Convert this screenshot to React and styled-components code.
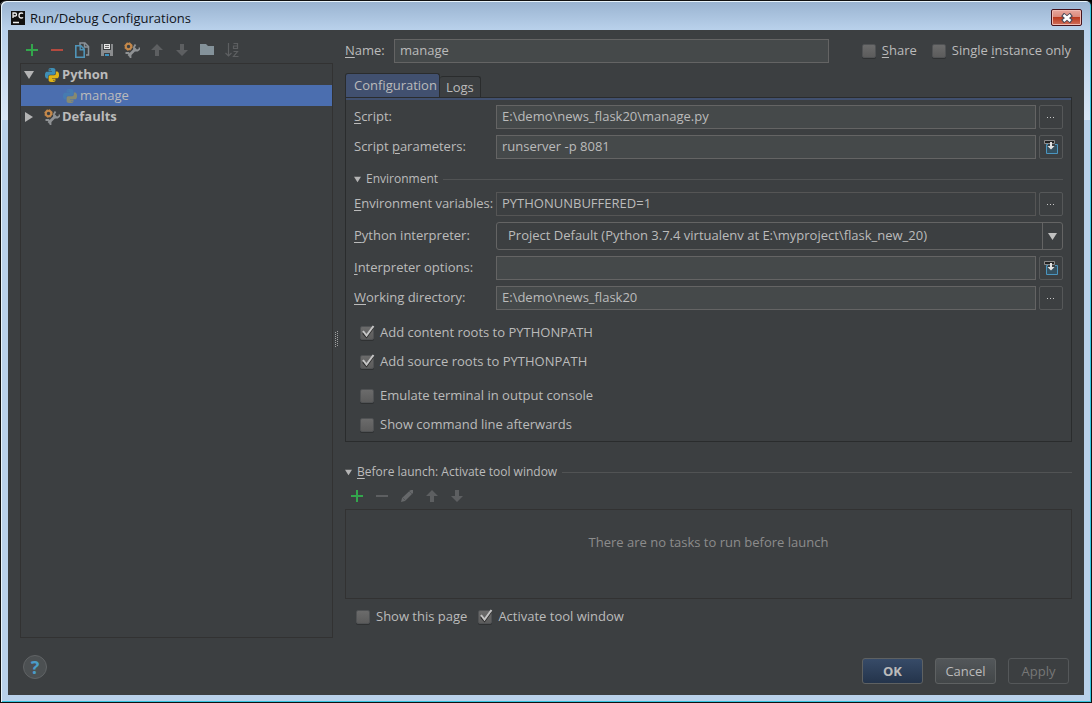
import React, { useId } from "react";
import styled, { createGlobalStyle, css } from "styled-components";

/* ——— Icons ——— */
const Plus = () => (
  <svg width="16" height="16" viewBox="0 0 16 16" aria-hidden="true">
    <path d="M7 2h2v5h5v2H9v5H7V9H2V7h5z" fill="#33a64c" />
  </svg>
);

const Minus = ({ color = "#b44a3f" }) => (
  <svg width="16" height="16" viewBox="0 0 16 16" aria-hidden="true">
    <path d="M2 7h12v2H2z" fill={color} />
  </svg>
);

const Copy = () => (
  <svg width="16" height="16" viewBox="0 0 16 16" aria-hidden="true">
    <path d="M6 3V1h5l3.500 3.500V13H12" fill="none" stroke="#8a9299" strokeWidth="1.500" />
    <path d="M10.500 1v4h4" fill="none" stroke="#8a9299" strokeWidth="1.500" />
    <path d="M1.800 3.800h5l3.400 3.400v8H1.800z" fill="#3c3f41" stroke="#4f94b8" strokeWidth="1.600" />
    <path d="M6.200 3.800v4h4" fill="none" stroke="#4f94b8" strokeWidth="1.400" />
  </svg>
);

const Save = () => (
  <svg width="16" height="16" viewBox="0 0 16 16" aria-hidden="true">
    <path d="M2 2h12v12H2z" fill="#8a8c8e" />
    <path d="M4 1h8v7H4z" fill="#3c3f41" />
    <path d="M5 2h6v5H5z" fill="#e4e4e4" />
    <path d="M6 3h4v1H6zM6 5h4v1H6z" fill="#6b6b6b" />
    <path d="M5 11h6v3H5z" fill="#3c3f41" />
    <path d="M6 12h4v2H6z" fill="#3f93c0" />
  </svg>
);

const Wrench = () => (
  <svg width="16" height="16" viewBox="0 0 16 16" aria-hidden="true">
    <path d="M4.500 14L12 6.500" stroke="#8f9294" strokeWidth="2.600" />
    <path d="M11.500 2.500L10 5v2l1.500 1.500h2L15.500 7V5.500" fill="none" stroke="#8f9294" strokeWidth="1.800" />
    <path d="M1.500 11h3l2 2v3" fill="none" stroke="#8f9294" strokeWidth="1.800" />
    <circle cx="4.500" cy="4.500" r="2.700" fill="#3c3f41" stroke="#c4884a" strokeWidth="2" />
    <circle cx="4.500" cy="4.500" r="3.800" fill="none" stroke="#c4884a" strokeWidth="1" strokeDasharray="1.500 1.500" />
  </svg>
);

const Arrow = ({ down }) => (
  <svg width="16" height="16" viewBox="0 0 16 16" aria-hidden="true">
    <path
      d={down ? "M6 2h4v6h4l-6 6-6-6h4z" : "M6 14h4V8h4L8 2 2 8h4z"}
      fill="#5d5f61"
    />
  </svg>
);

const Folder = () => (
  <svg width="16" height="16" viewBox="0 0 16 16" aria-hidden="true">
    <path d="M1 2h6l2 2h6v9H1z" fill="#84929a" />
  </svg>
);

const Sort = () => (
  <svg width="16" height="16" viewBox="0 0 16 16" aria-hidden="true">
    <path d="M4.500 1v13M1.500 11l3 3 3-3" fill="none" stroke="#5d5f61" strokeWidth="1.200" />
    <path d="M9.500 1.500h4v5.500M13.500 4h-4v2.500h4" fill="none" stroke="#5d5f61" strokeWidth="1.200" />
    <path d="M9.500 9.500h4l-4 5h5" fill="none" stroke="#5d5f61" strokeWidth="1.200" />
  </svg>
);

const Pencil = () => (
  <svg width="16" height="16" viewBox="0 0 16 16" aria-hidden="true">
    <path d="M2 14l1-4 8-7.500 1-.5h2v2.500l-.5 1L6 13z" fill="#66686a" />
    <path d="M3.500 9.500l3 3M10 3l3 3" stroke="#4c4f51" strokeWidth=".7" />
  </svg>
);

const Python = ({ faded }) => (
  <svg width="14" height="14" viewBox="0 0 24 24" opacity={faded ? 0.4 : 1} aria-hidden="true">
    <path
      fill="#3f8fb5"
      fillRule="evenodd"
      d="M14.250.18l.9.2.73.26.59.3.45.32.34.34.25.34.16.33.1.3.04.26.02.2-.01.13V8.500l-.05.63-.13.55-.21.46-.26.38-.3.31-.33.25-.35.19-.35.14-.33.1-.3.07-.26.04-.21.02H8.770l-.69.05-.59.14-.5.22-.41.27-.33.32-.27.35-.2.36-.15.37-.1.35-.07.32-.04.27-.02.21v3.060H3.170l-.21-.03-.28-.07-.32-.12-.35-.18-.36-.26-.36-.36-.35-.46-.32-.59-.28-.73-.21-.88-.14-1.050-.05-1.230.06-1.220.16-1.040.24-.87.32-.71.36-.57.4-.44.42-.33.42-.24.4-.16.36-.1.32-.05.24-.01h.16l.06.01h8.160v-.83H6.180l-.01-2.750-.02-.37.05-.34.11-.31.17-.28.25-.26.31-.23.38-.2.44-.18.51-.15.58-.12.64-.1.71-.06.77-.04.84-.02 1.270.05zm-6.300 1.980l-.23.33-.08.41.08.41.23.34.33.22.41.09.41-.09.33-.22.23-.34.08-.41-.08-.41-.23-.33-.33-.22-.41-.09-.41.09z"
    />
    <path
      fill="#e0b416"
      fillRule="evenodd"
      d="M21.040 6.110l.28.06.32.12.35.18.36.27.36.35.35.47.32.59.28.73.21.88.14 1.040.05 1.230-.06 1.230-.16 1.040-.24.86-.32.71-.36.57-.4.45-.42.33-.42.24-.4.16-.36.09-.32.05-.24.02-.16-.01h-8.220v.82h5.840l.01 2.760.02.36-.05.34-.11.31-.17.29-.25.25-.31.24-.38.2-.44.17-.51.15-.58.13-.64.09-.71.07-.77.04-.84.01-1.270-.04-1.070-.14-.9-.2-.73-.25-.59-.3-.45-.33-.34-.34-.25-.34-.16-.33-.1-.3-.04-.25-.02-.2.01-.13v-5.340l.05-.64.13-.54.21-.46.26-.38.3-.32.33-.24.35-.2.35-.14.33-.1.3-.06.26-.04.21-.02.13-.01h5.840l.69-.05.59-.14.5-.21.41-.28.33-.32.27-.35.2-.36.15-.36.1-.35.07-.32.04-.28.02-.21V6.070h2.090l.14.01zM14.570 20.360l-.23.33-.08.41.08.41.23.33.33.23.41.08.41-.08.33-.23.23-.33.08-.41-.08-.41-.23-.33-.33-.23-.41-.08-.41.08z"
    />
  </svg>
);

const Triangle = ({ size = 10, right, color = "#b4b4b4" }) => (
  <svg width={size} height={size} viewBox="0 0 10 10" aria-hidden="true">
    <path d={right ? "M1 0l8 5-8 5z" : "M0 1h10L5 9z"} fill={color} />
  </svg>
);

const Insert = () => (
  <svg width="16" height="16" viewBox="0 0 16 16" aria-hidden="true">
    <path d="M3.500 5.500h11v9h-11z" fill="#35505f" stroke="#4a95bf" />
    <path d="M5 4h7v3H5z" fill="#3c3f41" />
    <path d="M1.500 1.500h10v3h-10z" fill="#222" stroke="#8c8c8c" />
    <path d="M7 3h2v4h2.500L8 10.500 4.500 7H7z" fill="#e2e2e2" />
  </svg>
);

const Check = () => (
  <svg width="16" height="16" viewBox="0 0 16 16" aria-hidden="true">
    <path d="M4 8l3.500 4L14 3" fill="none" stroke="#2a2a2a" strokeWidth="2" />
    <path d="M4 6l3.500 4.500L14.500 1" fill="none" stroke="#c4c4c4" strokeWidth="2" />
  </svg>
);

const AppLogo = () => (
  <svg width="14" height="14" viewBox="0 0 14 14" aria-hidden="true">
    <path d="M0 0h14v14H0z" fill="#111" />
    <path d="M2 7V2h2.200q1.300 0 1.300 1.500T4.200 5H2M12 2.700Q11.400 2 10.300 2 8 2 8 4.500T10.300 7q1.100 0 1.700-.7M2 11.500h6" fill="none" stroke="#eee" strokeWidth="1.300" />
  </svg>
);

const CloseMark = () => (
  <svg width="12" height="10" viewBox="0 0 12 10" aria-hidden="true">
    <path d="M1.500 1.500l9 7M10.500 1.500l-9 7" stroke="#4a4a58" strokeWidth="4.600" />
    <path d="M2.500 2l7 6M9.500 2l-7 6" stroke="#fff" strokeWidth="2.600" />
  </svg>
);

const Grip = () => (
  <svg width="5" height="16" viewBox="0 0 5 16" shapeRendering="crispEdges" aria-hidden="true">
    <path d="M1.500 1v15M3.500 0v16" stroke="#a0a0a0" strokeDasharray="1 1" />
  </svg>
);

const Dots = () => (
  <svg width="8" height="2" viewBox="0 0 8 2" aria-hidden="true">
    <path d="M0 1h1v1H0zM3 1h1v1H3zM6 1h1v1H6z" fill="#c8c8c8" />
  </svg>
);

/* ——— Small parts ——— */
const CheckOption = ({ checked, children }) => (
  <OptionLabel>
    <BoxCell>
      <Box type="checkbox" defaultChecked={checked} />
      <Check />
    </BoxCell>
    <OptionText>{children}</OptionText>
  </OptionLabel>
);

const Field = ({ label, value, plain, button }) => {
  const id = useId();
  return (
    <FieldRow>
      <label htmlFor={id}>{label}</label>
      <TextInput id={id} defaultValue={value} $plain={plain} />
      <SmallButton type="button" aria-label={button === "insert" ? "Insert macro" : "Browse"}>
        {button === "insert" ? <Insert /> : <Dots />}
      </SmallButton>
    </FieldRow>
  );
};

const App = () => (
  <>
    <GlobalStyle />
    <Window>
      <TitleBar>
        <AppLogo />
        <Title>Run/Debug Configurations</Title>
        <CloseButton type="button" aria-label="Close">
          <CloseMark />
        </CloseButton>
      </TitleBar>

      <Dialog>
        <Main>
          <Sidebar>
            <Toolbar>
              <ToolButton aria-label="Add"><Plus /></ToolButton>
              <ToolButton aria-label="Remove"><Minus /></ToolButton>
              <ToolButton aria-label="Copy"><Copy /></ToolButton>
              <ToolButton aria-label="Save"><Save /></ToolButton>
              <ToolButton aria-label="Edit defaults"><Wrench /></ToolButton>
              <ToolButton aria-label="Move up" disabled><Arrow /></ToolButton>
              <ToolButton aria-label="Move down" disabled><Arrow down /></ToolButton>
              <ToolButton aria-label="New folder"><Folder /></ToolButton>
              <ToolButton aria-label="Sort" disabled><Sort /></ToolButton>
            </Toolbar>
            <Tree>
              <TreeRow $bold>
                <Triangle />
                <TreeIcon><Python /></TreeIcon>
                <span>Python</span>
              </TreeRow>
              <TreeRow $child $selected>
                <TreeIcon><Python faded /></TreeIcon>
                <span>manage</span>
              </TreeRow>
              <TreeRow $bold>
                <Triangle right />
                <TreeIcon><Wrench /></TreeIcon>
                <span>Defaults</span>
              </TreeRow>
            </Tree>
          </Sidebar>

          <Splitter><Grip /></Splitter>

          <Editor>
            <NameRow>
              <label htmlFor="name"><u>N</u>ame:</label>
              <TextInput id="name" defaultValue="manage" />
              <NameOptions>
                <CheckOption><u>S</u>hare</CheckOption>
                <CheckOption>Single <u>i</u>nstance only</CheckOption>
              </NameOptions>
            </NameRow>

            <Tabs>
              <Tab type="button" $active>Configuration</Tab>
              <Tab type="button">Logs</Tab>
            </Tabs>

            <Panel>
              <Fields>
                <Field label={<><u>S</u>cript:</>} value="E:\demo\news_flask20\manage.py" />
                <Field label={<>Script <u>p</u>arameters:</>} value="runserver -p 8081" button="insert" />
                <EnvironmentHeading>
                  <Triangle size={7} />
                  <span>Environment</span>
                </EnvironmentHeading>
                <Field label={<><u>E</u>nvironment variables:</>} value="PYTHONUNBUFFERED=1" plain />
                <FieldRow>
                  <label htmlFor="interpreter"><u>P</u>ython interpreter:</label>
                  <SelectWrap>
                    <Select id="interpreter">
                      <option>Project Default (Python 3.7.4 virtualenv at E:\myproject\flask_new_20)</option>
                    </Select>
                    <SelectArrow><Triangle size={9} color="#c0c0c0" /></SelectArrow>
                  </SelectWrap>
                </FieldRow>
                <Field label={<><u>I</u>nterpreter options:</>} value="" button="insert" />
                <Field label={<><u>W</u>orking directory:</>} value="E:\demo\news_flask20" />
              </Fields>
              <PanelOptions>
                <CheckOption checked>Add content roots to PYTHONPATH</CheckOption>
                <CheckOption checked>Add source roots to PYTHONPATH</CheckOption>
              </PanelOptions>
              <PanelOptions>
                <CheckOption>Emulate terminal in output console</CheckOption>
                <CheckOption>Show command line afterwards</CheckOption>
              </PanelOptions>
            </Panel>

            <LaunchHeading>
              <Triangle size={7} />
              <span><u>B</u>efore launch: Activate tool window</span>
            </LaunchHeading>
            <Toolbar>
              <ToolButton aria-label="Add task"><Plus /></ToolButton>
              <ToolButton aria-label="Remove task" disabled><Minus color="#5d5f61" /></ToolButton>
              <ToolButton aria-label="Edit task" disabled><Pencil /></ToolButton>
              <ToolButton aria-label="Move task up" disabled><Arrow /></ToolButton>
              <ToolButton aria-label="Move task down" disabled><Arrow down /></ToolButton>
            </Toolbar>
            <TaskList>There are no tasks to run before launch</TaskList>
            <LaunchOptions>
              <CheckOption>Show this page</CheckOption>
              <CheckOption checked>Activate tool window</CheckOption>
            </LaunchOptions>
          </Editor>
        </Main>

        <Footer>
          <HelpButton type="button">?</HelpButton>
          <Actions>
            <Button type="button" $primary>OK</Button>
            <Button type="button">Cancel</Button>
            <Button type="button" disabled>Apply</Button>
          </Actions>
        </Footer>
      </Dialog>
    </Window>
  </>
);

const GlobalStyle = createGlobalStyle`
  * {
    box-sizing: border-box;
  }
  body {
    margin: 0;
    background: #000;
    color: #bbbbbb;
    font: 13px/18px "Open Sans", "Noto Sans", sans-serif;
  }
  button, input, select {
    font: inherit;
    color: inherit;
    margin: 0;
    padding: 0;
  }
  svg {
    display: block;
    flex: none;
  }
  u {
    text-underline-offset: 2px;
  }
`;

/* ——— Window frame ——— */
const Window = styled.div`
  min-height: 100vh;
  display: flex;
  flex-direction: column;
  padding: 0 7px 7px;
  border: 1px solid #111;
  border-width: 1px 1px 1px 0;
  border-radius: 6px 6px 0 0;
  background: linear-gradient(#99b3d0, #b8d0ea 28px, #d9e6f5 119px, #b9d1ea 119px);
  box-shadow: inset 1px 0 #111, inset 2px 1px #e8f4fb, inset -1px -1px #35c5e0;
`;

const TitleBar = styled.header`
  height: 29px;
  display: flex;
  align-items: center;
  gap: 5px;
  padding: 4px 2px 0 4px;
  color: #10141a;
`;

const Title = styled.span`
  flex: 1;
`;

const CloseButton = styled.button`
  width: 31px;
  height: 17px;
  display: grid;
  place-items: center;
  border: 1px solid #46131c;
  border-radius: 2px;
  background: linear-gradient(#e8a79d, #d98679 50%, #bb3a20 50%, #d0705c);
  box-shadow: inset 0 0 0 1px #f0bab2;
`;

const Dialog = styled.div`
  flex: 1;
  display: flex;
  flex-direction: column;
  margin-left: 1px;
  background: #3c3f41;
`;

const Main = styled.div`
  flex: 1;
  display: flex;
  padding: 0 12px;
`;

/* ——— Left side ——— */
const Sidebar = styled.aside`
  flex: 0 0 313px;
  display: flex;
  flex-direction: column;
  padding-top: 7px;
`;

const Toolbar = styled.div`
  height: 26px;
  display: flex;
  gap: 1px;
`;

const ToolButton = styled.button.attrs({ type: "button" })`
  width: 24px;
  display: grid;
  place-items: center;
  border: 0;
  background: none;
`;

const Tree = styled.div`
  flex: 1;
  border: 1px solid #323232;
`;

const TreeRow = styled.div`
  height: 21px;
  display: flex;
  align-items: center;
  padding-left: ${({ $child }) => ($child ? "41px" : "3px")};
  font-weight: ${({ $bold }) => ($bold ? 700 : 400)};
  background: ${({ $selected }) => ($selected ? "#4b6eaf" : "none")};

  > svg {
    margin-right: 10px;
  }
  > span:last-child {
    padding-bottom: 2px;
  }
`;

const TreeIcon = styled.span`
  width: 16px;
  margin-right: 2px;
  display: grid;
  place-items: center;
`;

const Splitter = styled.div`
  flex: 0 0 12px;
  display: flex;
  align-items: center;
  padding: 9px 0 0 1px;
  cursor: col-resize;
`;

/* ——— Right side ——— */
const Editor = styled.main`
  flex: 1;
  min-width: 0;
  display: flex;
  flex-direction: column;
  padding-top: 9px;
`;

const NameRow = styled.div`
  display: flex;
  align-items: center;

  > label {
    flex: 0 0 49px;
    padding-bottom: 2px;
  }
`;

const NameOptions = styled.div`
  display: flex;
  gap: 14px;
  padding: 0 1px 0 32px;
`;

const TextInput = styled.input`
  flex: 1;
  min-width: 0;
  height: 24px;
  padding: 0 5px 2px;
  border: 1px solid ${({ $plain }) => ($plain ? "#555555" : "#646464")};
  background: ${({ $plain }) => ($plain ? "#3c3f41" : "#45494a")};
  outline: none;
`;

const OptionLabel = styled.label`
  display: flex;
  align-items: center;
  gap: 5px;
  white-space: nowrap;
`;

const OptionText = styled.span`
  padding-bottom: 2px;
`;

const BoxCell = styled.span`
  display: grid;
  place-items: center;

  > * {
    grid-area: 1 / 1;
  }
  svg {
    visibility: hidden;
    pointer-events: none;
  }
  input:checked + svg {
    visibility: visible;
  }
`;

const Box = styled.input`
  appearance: none;
  width: 14px;
  height: 14px;
  border: 1px solid #505254;
  border-radius: 2px;
  background: linear-gradient(#6b6b6b, #5c5c5c);
  box-shadow: 0 1px #2f3132;
`;

const Tabs = styled.div`
  display: flex;
  align-items: flex-end;
  margin-top: 10px;
`;

const Tab = styled.button`
  height: 21px;
  padding: 0 6px;
  border: 1px solid #2a2c2d;
  border-bottom: 0;
  border-left: 0;
  border-radius: 3px 3px 0 0;
  background: #3c3f41;

  ${({ $active }) =>
    $active &&
    css`
      height: 24px;
      padding: 0 2px 2px 8px;
      border-left: 1px solid #2a2c2d;
      background: #41506f;
    `}
`;

const Panel = styled.section`
  padding: 7px 8px 2px;
  border: 1px solid #2a2c2d;
  box-shadow: inset 0 2px #41506f;
`;

const Fields = styled.div`
  display: flex;
  flex-direction: column;
  gap: 6px;
  padding-bottom: 8px;
`;

const FieldRow = styled.div`
  display: flex;
  align-items: center;

  > label {
    flex: 0 0 142px;
    padding-bottom: 2px;
  }
`;

const SmallButton = styled.button`
  width: 24px;
  height: 24px;
  margin-left: 3px;
  display: grid;
  place-items: center;
  border: 1px solid #565859;
  border-radius: 2px;
  background: none;
`;

const Heading = styled.div`
  display: flex;
  align-items: center;
  gap: 5px;
  font-size: 12px;
  line-height: 14px;

  &::after {
    content: "";
    flex: 1;
    height: 1px;
    background: #515354;
  }
`;

const EnvironmentHeading = styled(Heading)`
  padding-top: 7px;
`;

const LaunchHeading = styled(Heading)`
  padding: 23px 0 4px;
`;

const SelectWrap = styled.div`
  position: relative;
  flex: 1;
  min-width: 0;
`;

const Select = styled.select`
  display: block;
  appearance: none;
  width: 100%;
  height: 28px;
  padding: 0 24px 2px 11px;
  border: 1px solid #646464;
  border-radius: 3px;
  background: #3c3f41;
`;

/* sits over the right end of the select */
const SelectArrow = styled.span`
  position: absolute;
  top: 1px;
  right: 1px;
  bottom: 1px;
  width: 20px;
  display: grid;
  place-items: center;
  border-left: 1px solid #646464;
  pointer-events: none;
`;

const PanelOptions = styled.div`
  padding-left: 5px;

  & + & {
    padding-top: 5px;
  }
  ${OptionLabel} {
    height: 29px;
  }
`;

const TaskList = styled.div`
  flex: 1;
  min-height: 90px;
  padding: 23px 0;
  border: 1px solid #323232;
  color: #8c8c8c;
  text-align: center;
`;

const LaunchOptions = styled.div`
  height: 39px;
  display: flex;
  align-items: center;
  gap: 10px;
  padding: 0 0 4px 10px;
`;

/* ——— Bottom bar ——— */
const Footer = styled.footer`
  display: flex;
  justify-content: space-between;
  padding: 17px 15px 11px;
`;

const HelpButton = styled.button`
  width: 24px;
  height: 24px;
  border: 1px solid #606365;
  border-radius: 50%;
  background: #4c5052;
  color: #4a9cc8;
  font-size: 18px;
  font-weight: 700;
  line-height: 20px;
`;

const Actions = styled.div`
  display: flex;
  gap: 12px;
  padding-top: 3px;
`;

const Button = styled.button`
  min-width: 61px;
  height: 26px;
  border: 1px solid #5e6162;
  border-radius: 3px;
  background: linear-gradient(#53575a, #424648);

  ${({ $primary }) =>
    $primary &&
    css`
      font-weight: 700;
      background: linear-gradient(#374b68, #24344b);
    `}

  &:disabled {
    border-color: #55585a;
    color: #777777;
    background: none;
  }
`;

export default App;
